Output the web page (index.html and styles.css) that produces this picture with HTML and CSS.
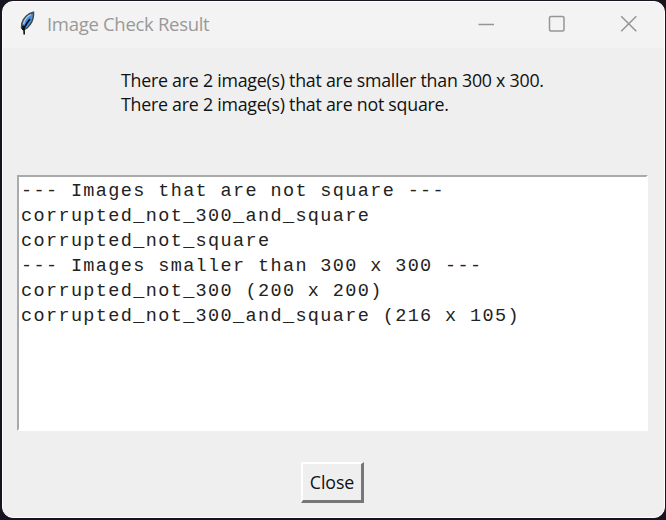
FILE: index.html
```html
<!DOCTYPE html>
<html lang="en">
<head>
<meta charset="utf-8">
<title>Image Check Result</title>
<link rel="stylesheet" href="styles.css">
</head>
<body>
<main class="window">
  <header class="titlebar">
    <svg class="feather" width="16" height="26" viewBox="0 0 16 26">
      <path d="M14.500 2.200C9 3.500 4 8 2.800 13.500L2.500 18 4.500 20 8 18C12.500 14 15 8 14.500 2.200Z" fill="#4b8fdc" stroke="#444" stroke-width="1.400"/>
      <path d="M12 4.500C8.500 6 5.500 10 4.500 14" fill="none" stroke="#a5cdf2" stroke-width="1.300"/>
      <path d="M11 9L8 13 5 18 5.200 24.500M4 15.500V20" fill="none" stroke="#090b10" stroke-width="1.600"/>
    </svg>
    <h1 class="title">Image Check Result</h1>
    <svg class="controls" width="160" height="20" viewBox="0 0 160 20">
      <path d="M.5 10.500H16"/>
      <rect x="71.500" y="2.500" width="14.500" height="14.500" rx="1.500"/>
      <path d="M143.200 2.200L158.300 17.300M158.300 2.200L143.200 17.300"/>
    </svg>
  </header>
  <section class="summary">
    <p>There are 2 image(s) that are smaller than 300 x 300.</p>
    <p>There are 2 image(s) that are not square.</p>
  </section>
  <pre class="results">--- Images that are not square ---
corrupted_not_300_and_square
corrupted_not_square
--- Images smaller than 300 x 300 ---
corrupted_not_300 (200 x 200)
corrupted_not_300_and_square (216 x 105)</pre>
  <footer class="actions"><button class="close">Close</button></footer>
</main>
</body>
</html>
```
FILE: styles.css
```css
* { box-sizing: border-box; }
body {
  margin: 0;
  width: 666px;
  height: 520px;
  padding: 1px 2px 2px;
  overflow: hidden;
  background: #17131f;
  font-family: "Open Sans", "Noto Sans", sans-serif;
}
.window {
  display: flex;
  flex-direction: column;
  height: 517px;
  width: 663px;
  border: 1px solid #fff;
  border-radius: 11px;
  background: #efefef;
  overflow: hidden;
}
.titlebar {
  display: flex;
  flex: 0 0 46px;
  background: #f3f3f3;
  padding-left: 16px;
}
.feather { margin-top: 8px; }
.title {
  margin: 8px 0 0 12px;
  width: 431px;
  font-size: 18.500px;
  line-height: 28px;
  font-weight: 400;
  letter-spacing: -0.300px;
  white-space: nowrap;
  color: #999;
}
.controls { margin-top: 12px; fill: none; stroke: #959595; stroke-width: 1.500; }
.summary {
  height: 127px;
  padding: 20px 0 0 118px;
  color: #111;
  font-size: 17.800px;
  line-height: 24px;
  letter-spacing: -0.240px;
  white-space: nowrap;
}
.summary p { margin: 0; }
.results {
  width: 631px;
  height: 256px;
  margin: 0 0 0 14px;
  padding: 2px 0 0 2px;
  border: 2px solid #fff;
  border-top-color: #aaa;
  border-left-color: #aaa;
  background: #fff;
  color: #222;
  font-family: "Liberation Mono", monospace;
  font-size: 18.500px;
  letter-spacing: 1.370px;
  line-height: 25px;
}
.actions { display: flex; padding: 31px 0 0 298px; }
.close {
  width: 63px;
  height: 41px;
  padding: 0;
  border: 2px solid #fff;
  border-right: 3px solid #777;
  border-bottom: 3px solid #777;
  background: #efefef;
  color: #111;
  font: 17.800px "Open Sans", sans-serif;
  letter-spacing: -0.100px;
}
```
